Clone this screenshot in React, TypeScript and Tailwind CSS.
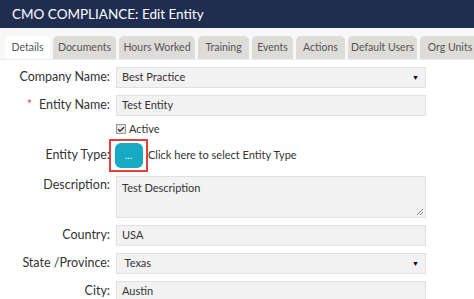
import { Check } from 'lucide-react';

const tabs: [string, string][] = [
  ['Details', 'w-[45px]'],
  ['Documents', 'w-[63px]'],
  ['Hours Worked', 'w-[76px]'],
  ['Training', 'w-[51px]'],
  ['Events', 'w-[41px]'],
  ['Actions', 'w-[49px]'],
  ['Default Users', 'w-[69px]'],
  ['Org Units', 'w-[60px]'],
];

function Label({ children, required }: { children: React.ReactNode; required?: boolean }) {
  return (
    <div className="w-[116px] shrink-0 text-right text-[12.5px] text-[#333] pr-[6px]">
      {required && <span className="text-[#d9534f] mr-[7px]">*</span>}
      {children}
    </div>
  );
}

function Field({ children, select }: { children: React.ReactNode; select?: boolean }) {
  return (
    <div className="w-[310px] h-[21px] flex items-center justify-between bg-[#f3f2f2] border border-[#e0e0e0] pl-[5px] pr-[6px] text-[11px] text-[#333]">
      <span>{children}</span>
      {select && <span className="text-[7px] text-black">▼</span>}
    </div>
  );
}

export default function App() {
  return (
    <div className="w-[474px] h-[299px] overflow-hidden bg-white" style={{ fontFamily: 'Lato, "Open Sans", sans-serif' }}>
      <div className="h-[28px] bg-[#1f2e50] flex items-center pl-[12px] text-white text-[13.5px]">
        CMO COMPLIANCE: Edit Entity
      </div>
      <div className="h-[32px] bg-[#f7f7f7] flex items-end gap-[3px] pl-[5px] border-b border-[#ececec]">
        {tabs.map(([t, w], i) => (
          <div
            key={t}
            className={
              'h-[23px] shrink-0 flex items-center justify-center whitespace-nowrap rounded-t-[5px] text-[10.5px] text-[#555] ' +
              w +
              ' ' +
              (i === 0 ? 'bg-white' : 'bg-[#dddcd9]')
            }
          >
            {t}
          </div>
        ))}
      </div>
      <div className="pt-[7px] flex flex-col">
        <div className="flex items-center h-[21px]">
          <Label>Company Name:</Label>
          <Field select>Best Practice</Field>
        </div>
        <div className="flex items-center h-[21px] mt-[7px]">
          <Label required>Entity Name:</Label>
          <Field>Test Entity</Field>
        </div>
        <div className="flex items-center mt-[6px] ml-[116px] h-[14px] text-[11px] text-[#333]">
          <span className="w-[10px] h-[10px] border border-[#999] bg-[#e8e8e8] flex items-center justify-center mr-[3px]">
            <Check className="w-[9px] h-[9px]" strokeWidth={4} />
          </span>
          Active
        </div>
        <div className="flex items-center h-[33px] mt-[3px]">
          <Label>Entity Type:</Label>
          <div className="-ml-[7px] border-2 border-[#e2403d] w-[39px] h-[33px] flex items-center justify-center">
            <div className="w-[28px] h-[25px] bg-[#18a9c3] rounded-[6px] flex items-center justify-center text-white text-[10px] leading-none pb-[2px]">
              ...
            </div>
          </div>
          <span className="text-[11px] text-[#333]">Click here to select Entity Type</span>
        </div>
        <div className="flex items-start mt-[4px]">
          <Label>Description:</Label>
          <div className="relative w-[310px] h-[42px] bg-[#f3f2f2] border border-[#e0e0e0] pl-[5px] pt-[3px] text-[11px] text-[#333]">
            Test Description
            <svg className="absolute right-[1px] bottom-[1px]" width="8" height="8" viewBox="0 0 8 8">
              <path d="M7 1 L1 7 M7 4 L4 7" stroke="#888" strokeWidth="1" />
            </svg>
          </div>
        </div>
        <div className="flex items-center h-[21px] mt-[7px]">
          <Label>Country:</Label>
          <Field>USA</Field>
        </div>
        <div className="flex items-center h-[21px] mt-[7px]">
          <Label>State /Province:</Label>
          <Field select>&nbsp;Texas</Field>
        </div>
        <div className="flex items-center h-[21px] mt-[7px]">
          <Label>City:</Label>
          <Field>Austin</Field>
        </div>
      </div>
    </div>
  );
}
